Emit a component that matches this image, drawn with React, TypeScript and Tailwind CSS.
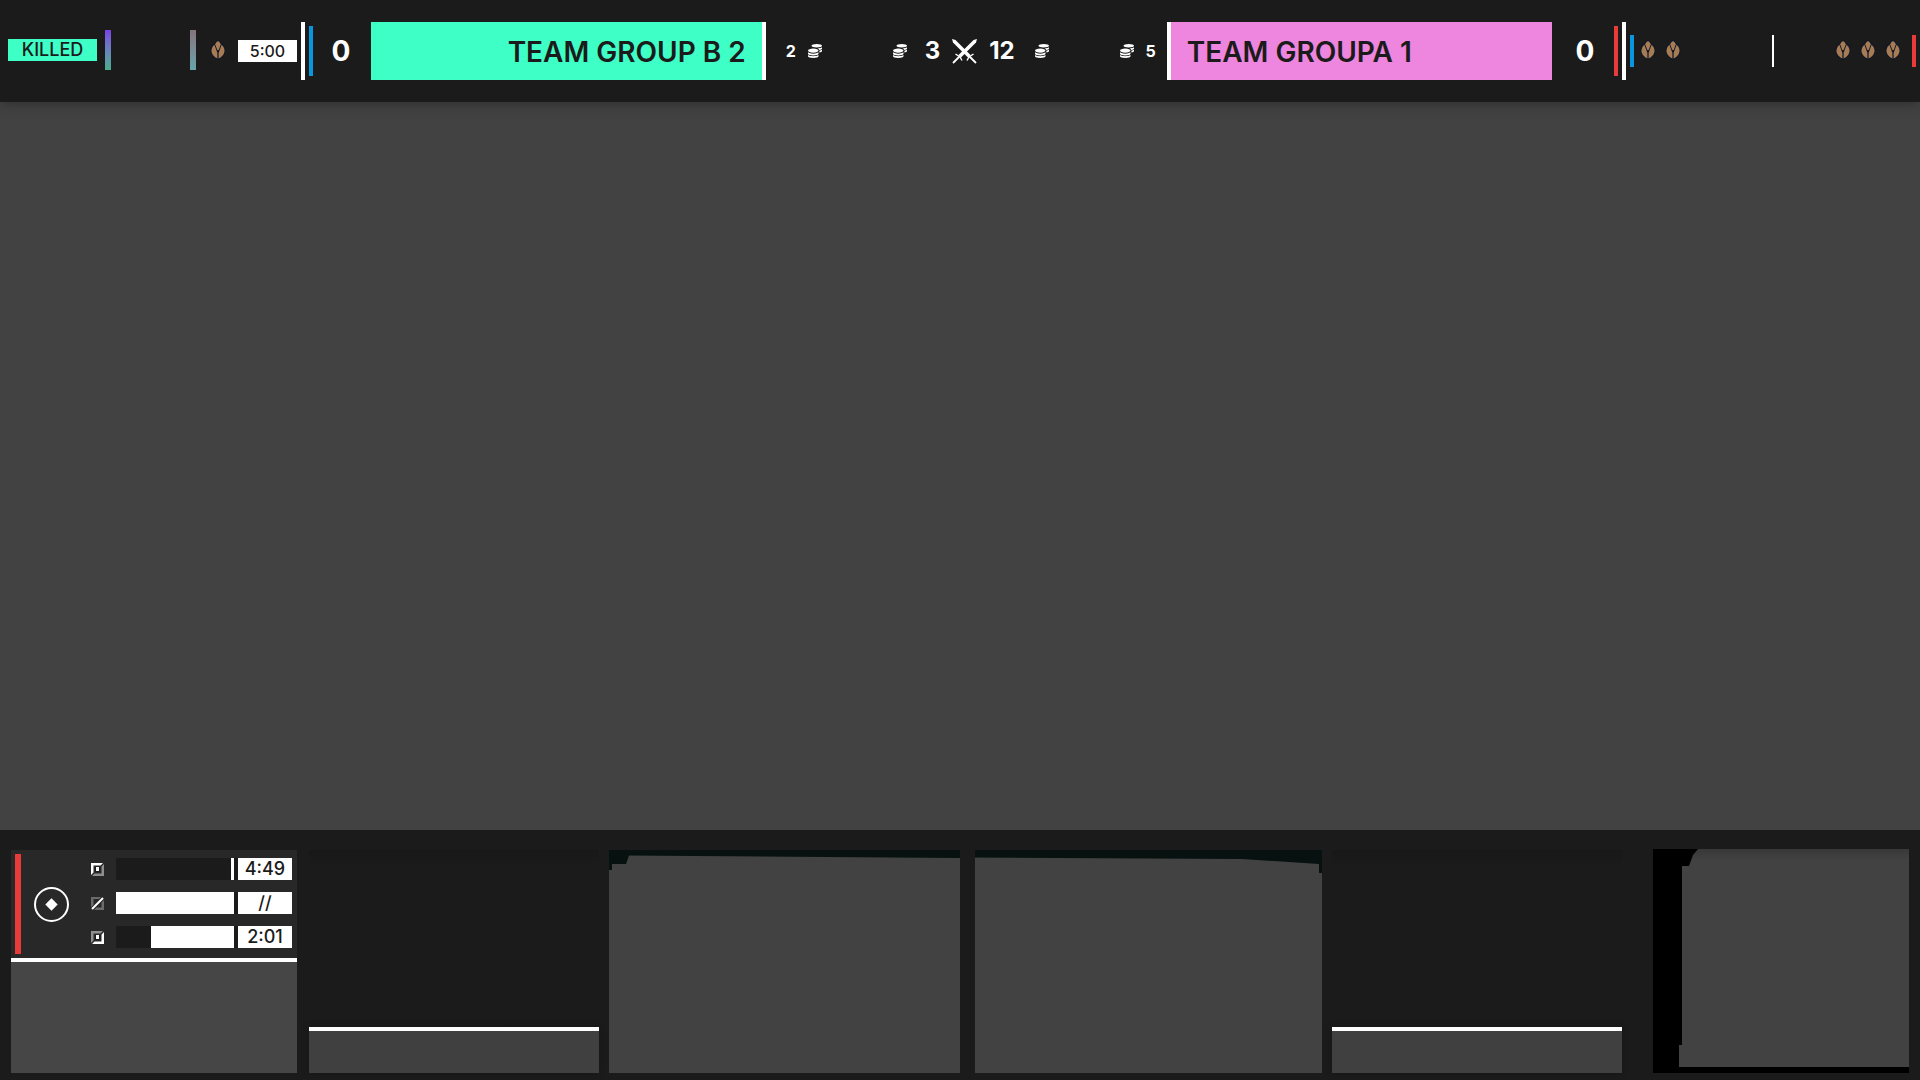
import React from "react";
import clsx from "clsx";
import { FaCoins } from "react-icons/fa";

type PerkVariant = "upper" | "slash" | "lower";

type Cooldown = {
  variant: PerkVariant;
  label: string;
  fill: number;
};

const cooldowns: Cooldown[] = [
  { variant: "upper", label: "4:49", fill: 2.5 },
  { variant: "slash", label: "//", fill: 100 },
  { variant: "lower", label: "2:01", fill: 70 },
];

const Seed = () => (
  <svg width="16" height="20" viewBox="0 0 16 20" className="shrink-0">
    <path
      d="M8 0 L11.500 3 Q16 6 15.800 11 Q14.500 16.500 8 20 Q1.500 16.500 0.200 11 Q0 6 4.500 3 Z"
      fill="#101828"
    />
    <g fill="#a77c55">
      <path d="M8 1 Q10.300 2.500 10.800 4.300 L8.700 10 H7.300 L5.200 4.300 Q5.700 2.500 8 1 Z" />
      <path d="M4.400 4.800 L7.400 13 V18.500 Q2.300 16 1.500 11.500 Q1.300 7.500 4.400 4.800 Z" />
      <path d="M11.600 4.800 L8.600 13 V18.500 Q13.700 16 14.500 11.500 Q14.700 7.500 11.600 4.800 Z" />
    </g>
  </svg>
);

const Swords = () => (
  <svg width="25" height="25" viewBox="0 0 25 25" className="mx-3 shrink-0">
    <g fill="#fff">
      <path d="M0 0 L3.500 1 L18.500 16 L16 18.500 L1 3.500 Z" />
      <path d="M25 0 L21.500 1 L6.500 16 L9 18.500 L24 3.500 Z" />
    </g>
    <g stroke="#fff" fill="none">
      <path d="M17 17 L24 24 M8 17 L1 24" strokeWidth="1.800" />
      <path d="M15 21.500 L17 18 L21.500 15 M10 21.500 L8 18 L3.500 15" strokeWidth="1.400" />
    </g>
  </svg>
);

const PerkIcon = ({ variant }: { variant: PerkVariant }) => {
  if (variant === "slash") {
    return (
      <svg width="13" height="13" viewBox="0 0 13 13">
        <path d="M0 10 V0 H10 L8 2 H2.500 V8 Z" fill="#6b6b6b" />
        <path d="M13 3 V13 H3 L5.500 10.500 H10.500 V5.500 Z" fill="#6b6b6b" />
        <path d="M1 12 L12 1" stroke="#fff" strokeWidth="2" />
      </svg>
    );
  }

  const isUpper = variant === "upper";

  return (
    <svg width="13" height="13" viewBox="0 0 13 13">
      <path
        d="M0 12 V0 H12 L9.500 2.500 H2.500 V9.500 Z"
        fill={isUpper ? "#fff" : "#8f8f8f"}
      />
      <path
        d="M13 1 V13 H1 L3.500 10.500 H10.500 V3.500 Z"
        fill={isUpper ? "#8f8f8f" : "#fff"}
      />
      <rect x="4" y="4" width="5" height="5" fill="#1b1b1b" />
      <rect x="5" y="4" width="3" height="4" fill="#fff" />
    </svg>
  );
};

const Bar = ({ className }: { className: string }) => (
  <div className={clsx("shrink-0", className)} />
);

const Header = () => (
  <header className="relative z-10 flex h-[102px] items-center bg-[#1b1b1b] text-white shadow-[0_2px_12px_rgba(0,0,0,0.3)]">
    <div className="flex shrink-0 items-center pl-2">
      <div className="flex items-center pb-0.5">
        <div className="flex h-[22px] w-[89px] items-center justify-center bg-[#3effc5] text-lg font-medium text-[#1b1b1b]">
          KILLED
        </div>
        <Bar className="ml-2 h-10 w-1.5 bg-linear-to-b from-[#7a3fe4] to-[#4aae8c]" />
        <Bar className="ml-[79px] h-10 w-1.5 bg-linear-to-b from-[#84747c] to-[#67a4ac]" />
        <div className="flex w-[42px] justify-center pl-0.5">
          <Seed />
        </div>
      </div>
      <div className="flex h-[22px] w-[59px] items-center justify-center bg-white text-base font-medium text-[#1b1b1b]">
        5:00
      </div>
      <Bar className="ml-1 h-[58px] w-1 bg-white" />
      <Bar className="ml-1 h-[50px] w-1 bg-[#0896de]" />
      <div className="w-[58px] pr-0.5 text-center text-[28px] font-bold">0</div>
    </div>

    <div className="flex h-[58px] flex-[395] items-center justify-end border-r-4 border-white bg-[#3effc5] pt-0.5 pr-4 text-[28px] font-semibold whitespace-nowrap text-[#1b1b1b]">
      TEAM GROUP B 2
    </div>

    <div className="flex w-[401px] shrink-0 items-center justify-between pr-[11px] pl-5">
      <div className="flex items-center gap-3 font-bold">
        <span>2</span>
        <FaCoins size={14} />
      </div>
      <div className="flex items-center text-2xl font-bold">
        <FaCoins size={14} />
        <span className="ml-[18px]">3</span>
        <Swords />
        <span>12</span>
        <FaCoins size={14} className="ml-5" />
      </div>
      <div className="flex items-center gap-3 font-bold">
        <FaCoins size={14} />
        <span>5</span>
      </div>
    </div>

    <div className="flex h-[58px] flex-[385] items-center border-l-4 border-white bg-[#ee85de] pt-0.5 pl-4 text-[28px] font-semibold whitespace-nowrap text-[#1b1b1b]">
      TEAM GROUPA 1
    </div>

    <div className="flex shrink-0 items-center pr-1">
      <div className="w-[62px] pl-1 text-center text-[28px] font-bold">0</div>
      <Bar className="h-[50px] w-1 bg-[#ea3b3b]" />
      <Bar className="ml-1 h-[58px] w-1 bg-white" />
      <Bar className="ml-1 h-8 w-1 bg-[#0896de]" />
      <div className="ml-1.5 flex gap-[9px] pb-0.5">
        <Seed />
        <Seed />
      </div>
      <Bar className="ml-[91px] h-8 w-0.5 bg-white" />
      <div className="mr-[11px] ml-[61px] flex gap-[9px] pb-0.5">
        <Seed />
        <Seed />
        <Seed />
      </div>
      <Bar className="h-8 w-1 bg-[#ea3b3b]" />
    </div>
  </header>
);

const PlayerPanel = () => (
  <section className="flex flex-[286] flex-col">
    <div className="flex h-[108px] items-center bg-[#282828] pl-1">
      <Bar className="h-[100px] w-1.5 bg-[#ea3b3b]" />
      <svg width="36" height="36" viewBox="0 0 36 36" className="ml-3 shrink-0">
        <circle cx="18.500" cy="18.500" r="16.500" fill="none" stroke="#fff" strokeWidth="2" />
        <path d="M18.500 12.300 L24.700 18.500 L18.500 24.700 L12.300 18.500 Z" fill="#fff" />
      </svg>
      <div className="ml-[22px] flex flex-1 flex-col gap-3 pr-[5px] pb-0.5">
        {cooldowns.map((item) => (
          <div key={item.variant} className="flex items-center">
            <PerkIcon variant={item.variant} />
            <div className="ml-3 flex h-[22px] flex-1 justify-end border-r-4 border-[#1b1b1b] bg-[#1b1b1b]">
              <div className="bg-white" style={{ width: `${item.fill}%` }} />
            </div>
            <div className="flex h-[22px] w-[54px] items-center justify-center bg-white text-lg font-medium text-[#1b1b1b]">
              {item.label}
            </div>
          </div>
        ))}
      </div>
    </div>
    <div className="flex-1 border-t-4 border-white bg-[#464646]" />
  </section>
);

const EmptyPanel = ({ className }: { className?: string }) => (
  <section className={clsx("flex flex-[290] flex-col", className)}>
    <div className="h-[177px] bg-linear-to-b from-[#181818] to-[#1b1b1b] to-10%" />
    <div className="flex-1 border-t-4 border-white bg-[#404040] shadow-[0_0_8px_rgba(0,0,0,0.2)]" />
  </section>
);

const Footer = () => (
  <footer className="flex h-[250px] bg-[#1b1b1b] pt-5 pr-[11px] pb-[7px] pl-[11px]">
    <PlayerPanel />
    <EmptyPanel className="ml-3" />
    <section className="ml-2.5 flex-[351] bg-[#424242]">
      <svg className="h-5 w-full" viewBox="0 0 351 20" preserveAspectRatio="none">
        <path d="M0 0 H351 V8 L20 5.500 L17 14 H3 V20 H0 Z" fill="#07110f" />
      </svg>
    </section>
    <section className="ml-[15px] flex-[347] bg-[#424242]">
      <svg className="h-[23px] w-full" viewBox="0 0 347 23" preserveAspectRatio="none">
        <path d="M0 0 H347 V23 H344 V14 L267 9 L0 7.500 Z" fill="#07110f" />
      </svg>
    </section>
    <EmptyPanel className="ml-2.5" />
    <section className="-mt-px ml-[31px] flex-[256] bg-linear-to-b from-[#383838] to-[#424242] to-5%">
      <svg className="h-full w-full" viewBox="0 0 256 224" preserveAspectRatio="none">
        <path
          d="M0 0 H45 L40 6 L36 17 H29 V196 H26 V218 H256 V224 H0 Z"
          fill="#000"
        />
      </svg>
    </section>
  </footer>
);

const App = () => {
  return (
    <div className="flex min-h-screen flex-col bg-[#424242] font-['Inter',sans-serif]">
      <Header />
      <main className="flex-1" />
      <Footer />
    </div>
  );
};

export default App;
